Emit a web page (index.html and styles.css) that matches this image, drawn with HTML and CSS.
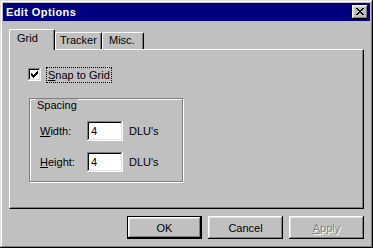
FILE: index.html
```html
<!DOCTYPE html>
<html lang="en">
<head>
    <meta charset="UTF-8">
    <title>Edit Options</title>
    <link rel="stylesheet" href="styles.css">
</head>
<body>
    <div class="window">
        <div class="title-bar">
            <span class="title">Edit Options</span>
            <button class="close-btn" aria-label="Close">
                <svg width="8" height="7" viewBox="0 0 8 7" shape-rendering="crispEdges">
                    <path d="M0 0h2v1h-2zM6 0h2v1h-2zM1 1h2v1h-2zM5 1h2v1h-2zM2 2h4v1h-4zM3 3h2v1h-2zM2 4h4v1h-4zM1 5h2v1h-2zM5 5h2v1h-2zM0 6h2v1h-2zM6 6h2v1h-2z" fill="#000"/>
                </svg>
            </button>
        </div>

        <div class="dialog-body">
            <div class="tabs">
                <div class="tab tab-grid selected">Grid</div>
                <div class="tab tab-tracker">Tracker</div>
                <div class="tab tab-misc">Misc.</div>
            </div>

            <div class="tab-panel">
                <div class="check-row">
                    <span class="checkbox">
                        <svg width="13" height="13" viewBox="0 0 13 13" shape-rendering="crispEdges">
                            <path d="M9 3h1v3h-1zM8 4h1v3h-1zM7 5h1v3h-1zM6 6h1v3h-1zM5 7h1v3h-1zM4 6h1v3h-1zM3 5h1v3h-1z" fill="#000"/>
                        </svg>
                    </span>
                    <span class="check-label"><u>S</u>nap to Grid</span>
                </div>

                <div class="group">
                    <span class="group-label">Spacing</span>
                    <div class="field-row first">
                        <span class="field-label"><u>W</u>idth:</span>
                        <span class="field">4</span>
                        <span class="unit">DLU's</span>
                    </div>
                    <div class="field-row">
                        <span class="field-label"><u>H</u>eight:</span>
                        <span class="field">4</span>
                        <span class="unit">DLU's</span>
                    </div>
                </div>
            </div>

            <div class="buttons">
                <button class="btn default">OK</button>
                <button class="btn">Cancel</button>
                <button class="btn disabled"><u>A</u>pply</button>
            </div>
        </div>
    </div>
</body>
</html>
```

FILE: styles.css
```css
body {
    margin: 0;
    font-family: 'Liberation Sans', Arial, sans-serif;
    font-size: 11px;
    color: #000;
    background: #c0c0c0;
}
.window {
    width: 373px;
    height: 248px;
    box-sizing: border-box;
    padding: 3px;
    background: #c0c0c0;
    box-shadow: inset -1px -1px #000, inset 1px 1px #dfdfdf, inset -2px -2px #808080, inset 2px 2px #fff;
    display: flex;
    flex-direction: column;
}
.title-bar {
    height: 18px;
    background: #000080;
    display: flex;
    align-items: center;
    justify-content: space-between;
    padding: 0 2px 0 3px;
}
.title { color: #fff; font-weight: bold; line-height: 13px; letter-spacing: 0.4px; }
.close-btn {
    width: 16px;
    height: 14px;
    padding: 0;
    border: 0;
    background: #c0c0c0;
    box-shadow: inset -1px -1px #000, inset 1px 1px #fff, inset -2px -2px #808080, inset 2px 2px #dfdfdf;
    display: flex;
    align-items: center;
    justify-content: center;
}
.close-btn svg { display: block; margin: 0 1px 1px 0; }

.dialog-body {
    padding: 8px 6px 0 6px;
    display: flex;
    flex-direction: column;
}
.tabs {
    display: flex;
    align-items: flex-end;
    height: 21px;
}
.tab {
    box-sizing: border-box;
    height: 17px;
    margin-bottom: 1px;
    border-top: 1px solid #fff;
    border-left: 1px solid #fff;
    border-right: 1px solid #000;
    border-radius: 2px 2px 0 0;
    box-shadow: inset -1px 0 #808080;
    background: #c0c0c0;
    line-height: 13px;
    padding-top: 1px;
}
.tab.selected {
    height: 21px;
    margin-bottom: 0;
    padding-top: 2px;
    position: relative;
    z-index: 1;
}
.tab-grid { width: 46px; padding-left: 7px; }
.tab-tracker { width: 47px; border-left: 0; box-shadow: inset -1px 0 #808080, inset 1px 0 #fff; padding-left: 5px; }
.tab-misc { width: 42px; padding-left: 6px; }

.tab-panel {
    box-sizing: border-box;
    height: 160px;
    margin-top: -1px;
    border-top: 1px solid #fff;
    border-left: 1px solid #fff;
    border-right: 1px solid #000;
    border-bottom: 1px solid #000;
    box-shadow: inset -1px -1px #808080;
    padding: 17px 0 0 18px;
}
.check-row {
    display: flex;
    align-items: flex-start;
    height: 17px;
}
.checkbox {
    width: 13px;
    height: 13px;
    margin-top: 1px;
    background: #fff;
    box-shadow: inset -1px -1px #fff, inset 1px 1px #808080, inset -2px -2px #dfdfdf, inset 2px 2px #000;
}
.checkbox svg { display: block; }
.check-label {
    margin-left: 5px;
    padding: 0 1px;
    border: 1px dotted #000;
    line-height: 14px;
}

.group {
    box-sizing: border-box;
    width: 154px;
    height: 84px;
    margin: 14px 0 0 1px;
    border: 1px solid #808080;
    box-shadow: inset 1px 1px #fff, 1px 1px #fff;
    padding-left: 10px;
}
.group-label {
    display: inline-block;
    margin: -7px 0 0 -4px;
    padding: 0 1px;
    background: #c0c0c0;
    line-height: 13px;
}
.field-row {
    display: flex;
    align-items: center;
    height: 20px;
    margin-top: 11px;
}
.field-row.first { margin-top: 9px; }
.field-label { width: 47px; }
.field {
    box-sizing: border-box;
    width: 36px;
    height: 20px;
    padding: 0 0 0 4px;
    background: #fff;
    box-shadow: inset -1px -1px #fff, inset 1px 1px #808080, inset -2px -2px #dfdfdf, inset 2px 2px #000;
    line-height: 20px;
}
.unit { margin-left: 6px; }

.buttons {
    display: flex;
    justify-content: flex-end;
    gap: 6px;
    margin-top: 7px;
}
.btn {
    box-sizing: border-box;
    width: 75px;
    height: 23px;
    padding: 0;
    border: 0;
    background: #c0c0c0;
    font-family: inherit;
    font-size: 11px;
    color: #000;
    box-shadow: inset -1px -1px #000, inset 1px 1px #fff, inset -2px -2px #808080, inset 2px 2px #dfdfdf;
}
.btn.default {
    border: 1px solid #000;
}
.btn.disabled {
    color: #808080;
    text-shadow: 1px 1px #fff;
}
```
